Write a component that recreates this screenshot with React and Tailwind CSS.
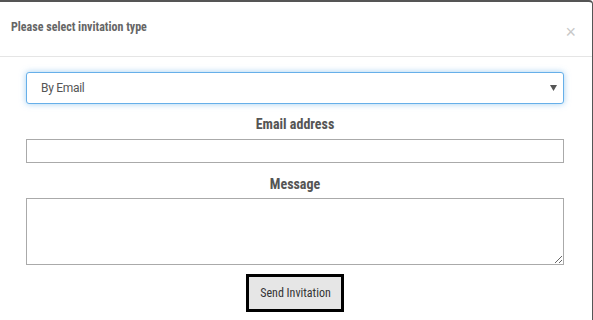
import React from "react";

const narrow = { fontFamily: '"Roboto Condensed", "Liberation Sans Narrow", "Arial Narrow", "DejaVu Sans Condensed", sans-serif' };

const App = () => {
  return (
    <div className="w-[593px] h-[320px] bg-white overflow-hidden" style={narrow}>
      <div className="h-full border-t-2 border-r border-[#555] rounded-tr-[4px]">
        <div className="h-[55px] flex items-center justify-between pl-[11px] pr-[16px] border-b border-[#e5e5e5]">
          <h4 className="text-[12px] font-bold text-[#666] -mt-[4px]">Please select invitation type</h4>
          <span className="text-[#c8c8c8] text-[18px] leading-none mt-[6px]" style={{ fontFamily: '"Liberation Sans", sans-serif' }}>×</span>
        </div>
        <div className="px-[26px] pt-[15px] pr-[28px] flex flex-col">
          <div className="relative">
            <select
              defaultValue="email"
              className="w-full h-[32px] appearance-none bg-white border border-[#66afe9] rounded-[3px] pl-[14px] text-[12px] text-[#555] outline-none shadow-[0_0_6px_rgba(102,175,233,0.6)]"
              style={{ fontFamily: 'Roboto, "Liberation Sans", sans-serif', letterSpacing: "-0.3px" }}
            >
              <option value="email">By Email</option>
              <option value="link">By Link</option>
            </select>
            <svg className="absolute right-[7px] top-[13px] w-[7px] h-[6px]" viewBox="0 0 7 6">
              <path d="M0 0h7L3.5 6z" fill="#555" />
            </svg>
          </div>
          <label className="mt-[11px] text-center text-[14px] font-bold text-[#555] leading-[18px]">Email address</label>
          <input type="text" className="mt-[6px] h-[24px] border border-[#aaa] outline-none" />
          <label className="mt-[12px] text-center text-[14px] font-bold text-[#555] leading-[18px]">Message</label>
          <textarea className="mt-[5px] h-[67px] border border-[#aaa] outline-none" />
          <div className="flex justify-center mt-[9px]">
            <button className="w-[98px] h-[38px] border-[3px] border-black bg-[#e6e6e6] text-[12px] text-[#333] pl-[1px]">
              Send Invitation
            </button>
          </div>
        </div>
      </div>
    </div>
  );
};

export default App;
